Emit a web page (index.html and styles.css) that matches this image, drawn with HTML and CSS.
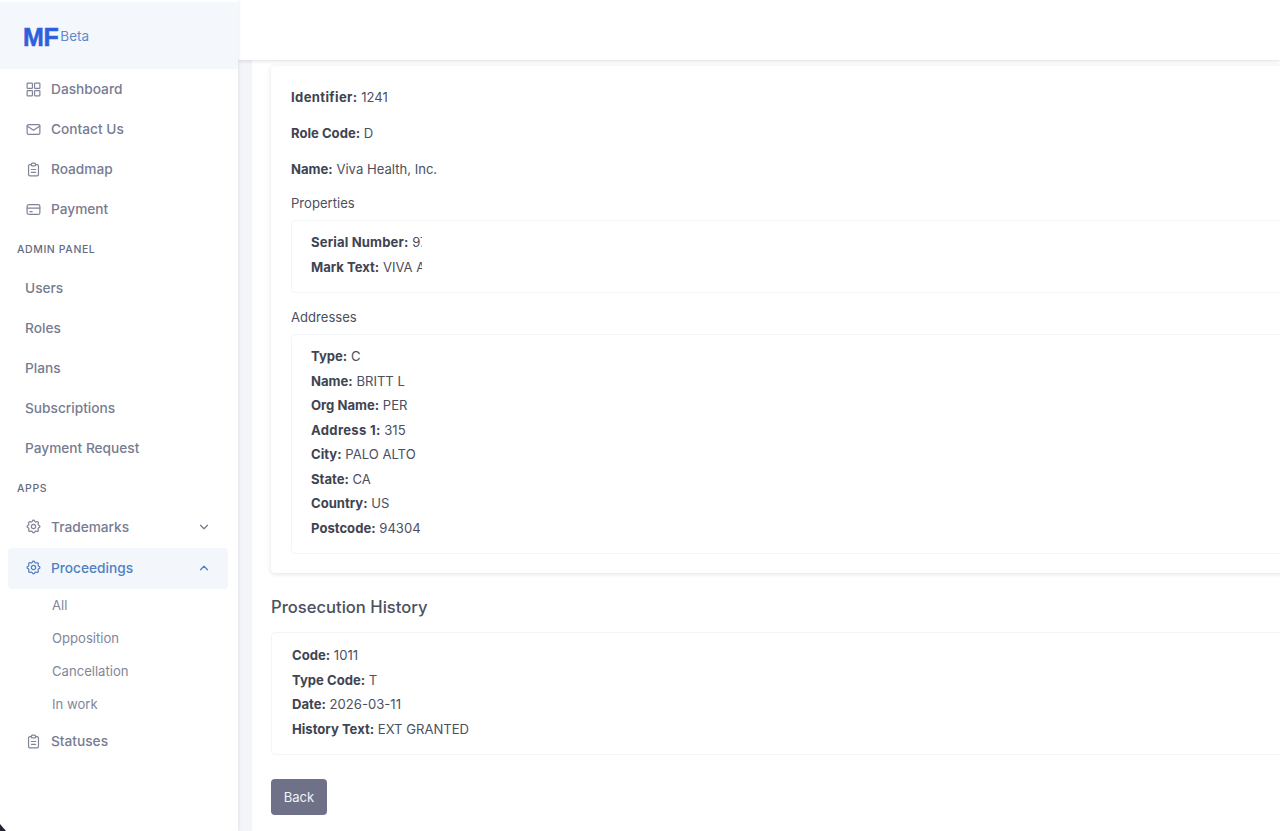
FILE: index.html
```html
<!DOCTYPE html>
<html lang="en">
<head>
<meta charset="utf-8">
<title>Proceedings</title>
<link rel="stylesheet" href="styles.css">
</head>
<body>
<svg class="defs" width="0" height="0" aria-hidden="true">
  <symbol id="i-grid" viewBox="0 0 24 24"><rect x="3" y="3" width="7.5" height="7.5" rx="1"/><rect x="13.5" y="3" width="7.5" height="7.5" rx="1"/><rect x="3" y="13.5" width="7.5" height="7.5" rx="1"/><rect x="13.5" y="13.5" width="7.5" height="7.5" rx="1"/></symbol>
  <symbol id="i-mail" viewBox="0 0 24 24"><rect x="3" y="5" width="18" height="14" rx="2"/><path d="M3 7l9 6 9-6"/></symbol>
  <symbol id="i-clip" viewBox="0 0 24 24"><path d="M9 5H7a2 2 0 0 0-2 2v12a2 2 0 0 0 2 2h10a2 2 0 0 0 2-2V7a2 2 0 0 0-2-2h-2"/><rect x="9" y="3" width="6" height="4" rx="1.5"/><path d="M9 12h6M9 16h6"/></symbol>
  <symbol id="i-card" viewBox="0 0 24 24"><rect x="3" y="5" width="18" height="14" rx="2.5"/><path d="M3 10h18M7 15h3"/></symbol>
  <symbol id="i-gear" viewBox="0 0 24 24"><path d="M10.3 4.3c.4-1.8 3-1.8 3.4 0a1.7 1.7 0 0 0 2.6 1.1c1.5-.9 3.3.8 2.4 2.4a1.7 1.7 0 0 0 1 2.5c1.8.4 1.8 3 0 3.4a1.7 1.7 0 0 0-1 2.6c.9 1.5-.9 3.3-2.4 2.4a1.7 1.7 0 0 0-2.6 1c-.4 1.8-3 1.8-3.4 0a1.7 1.7 0 0 0-2.6-1c-1.5.9-3.3-.9-2.4-2.4a1.7 1.7 0 0 0-1-2.6c-1.8-.4-1.8-3 0-3.4a1.7 1.7 0 0 0 1-2.5c-.9-1.6.9-3.3 2.4-2.4a1.7 1.7 0 0 0 2.6-1.1z"/><circle cx="12" cy="12" r="3"/></symbol>
  <symbol id="i-down" viewBox="0 0 24 24"><path d="M6 9l6 6 6-6"/></symbol>
  <symbol id="i-up" viewBox="0 0 24 24"><path d="M6 15l6-6 6 6"/></symbol>
</svg>
<div class="app">
  <aside class="sidebar">
    <div class="brand"><span class="logo">MF</span><span class="beta">Beta</span></div>
    <nav class="nav">
      <a class="item"><svg class="ico"><use href="#i-grid"/></svg>Dashboard</a>
      <a class="item"><svg class="ico"><use href="#i-mail"/></svg>Contact Us</a>
      <a class="item"><svg class="ico"><use href="#i-clip"/></svg>Roadmap</a>
      <a class="item"><svg class="ico"><use href="#i-card"/></svg>Payment</a>
      <div class="section">ADMIN PANEL</div>
      <a class="item plain">Users</a>
      <a class="item plain">Roles</a>
      <a class="item plain">Plans</a>
      <a class="item plain">Subscriptions</a>
      <a class="item plain">Payment Request</a>
      <div class="section apps">APPS</div>
      <a class="item tm"><svg class="ico"><use href="#i-gear"/></svg>Trademarks<svg class="chev"><use href="#i-down"/></svg></a>
      <a class="item active"><svg class="ico"><use href="#i-gear"/></svg>Proceedings<svg class="chev"><use href="#i-up"/></svg></a>
      <div class="sub">
        <a class="subitem">All</a>
        <a class="subitem">Opposition</a>
        <a class="subitem">Cancellation</a>
        <a class="subitem">In work</a>
      </div>
      <a class="item"><svg class="ico"><use href="#i-clip"/></svg>Statuses</a>
    </nav>
    <div class="corner"></div>
  </aside>
  <div class="main">
    <header class="topbar"></header>
    <div class="stage">
      <div class="panel">
        <section class="card">
          <p class="line clip-id ident"><b>Identifier:</b> 1241</p>
          <p class="line clip-id"><b>Role Code:</b> D</p>
          <p class="line"><b>Name:</b> Viva Health, Inc.</p>
          <h4 class="label">Properties</h4>
          <div class="box props">
            <div class="row clip-a serial"><b>Serial Number:</b> 97</div>
            <div class="row clip-a"><b>Mark Text:</b> VIVA AID</div>
          </div>
          <h4 class="label addr">Addresses</h4>
          <div class="box addrs">
            <div class="row"><b>Type:</b> C</div>
            <div class="row clip-b"><b>Name:</b> BRITT L</div>
            <div class="row clip-b"><b>Org Name:</b> PER</div>
            <div class="row clip-b addr1"><b>Address 1:</b> 315</div>
            <div class="row"><b>City:</b> PALO ALTO</div>
            <div class="row"><b>State:</b> CA</div>
            <div class="row"><b>Country:</b> US</div>
            <div class="row"><b>Postcode:</b> 94304</div>
          </div>
        </section>
        <h3 class="heading">Prosecution History</h3>
        <div class="box history">
          <div class="row"><b>Code:</b> 1011</div>
          <div class="row"><b>Type Code:</b> T</div>
          <div class="row"><b>Date:</b> 2026-03-11</div>
          <div class="row"><b>History Text:</b> EXT GRANTED</div>
        </div>
        <button class="back" type="button">Back</button>
      </div>
    </div>
  </div>
</div>
</body>
</html>
```
FILE: styles.css
```css
* { box-sizing: border-box; }
html, body { margin: 0; height: 100%; overflow: hidden; }
body { background: #fff; font-family: "Inter", "Liberation Sans", sans-serif; font-size: 13.1px; color: #4b5060; }
.defs { position: absolute; }
.app { display: grid; grid-template-columns: 238px 1fr; height: 831px; }

.sidebar { position: relative; background: #fff; box-shadow: 0 0 4px rgba(60, 70, 100, .16); z-index: 3; overflow: hidden; }
.brand { height: 67px; margin-top: 2px; background: #f4f7fb; display: flex; align-items: center; padding-left: 23px; }
.logo { font-family: "Liberation Sans", sans-serif; font-weight: 700; font-size: 25px; letter-spacing: -.4px; -webkit-text-stroke: .5px #2f5fdc; color: #2f5fdc; line-height: 1; margin-top: 3px; }
.beta { color: #5e8ad0; font-size: 13.5px; margin-left: 2px; }

.nav { display: flex; flex-direction: column; }
.item { display: flex; align-items: center; height: 40px; padding-left: 24.5px; color: #777c92; font-weight: 500; font-size: 13.7px; }
.item.plain { padding-left: 25px; }
.ico { width: 17px; height: 17px; margin-right: 9.5px; fill: none; stroke: #7f8498; stroke-width: 1.7; stroke-linecap: round; stroke-linejoin: round; flex: none; }
.section { height: 39px; padding: 14px 0 0 17px; font-size: 10.5px; font-weight: 500; letter-spacing: .6px; color: #666b80; }
.section.apps { height: 38px; padding-top: 14px; }
.tm { height: 41px; }
.chev { width: 14px; height: 14px; margin-left: auto; margin-right: 27px; fill: none; stroke: currentColor; stroke-width: 2.2; stroke-linecap: round; stroke-linejoin: round; }
.item.active { margin: 1px 10px 0 8px; padding: 0 0 2px 16.5px; height: 41px; border-radius: 4px; background: #f3f6fb; color: #4f80c4; }
.item.active .ico { stroke: #4f80c4; }
.item.active .chev { margin-right: 17px; }
.sub { display: flex; flex-direction: column; margin: -.5px 0 .5px; }
.subitem { height: 33px; display: flex; align-items: center; padding-left: 52px; color: #82869a; font-size: 13.1px; }
.corner { position: absolute; left: 0; bottom: 0; width: 6px; height: 7px; background: #23262e; clip-path: polygon(0 0, 100% 100%, 0 100%); }

.main { display: flex; flex-direction: column; min-width: 0; overflow: hidden; }
.topbar { height: 60px; flex: none; background: #fff; box-shadow: 0 1px 4px rgba(60, 70, 100, .18); position: relative; z-index: 2; }
.stage { flex: 1; background: #f4f5f9; padding-left: 14px; min-height: 0; }
.panel { background: #fff; height: 100%; padding: 6px 0 0 19px; }
.card { margin-right: -30px; height: 507px; padding: 13px 0 0 20px; border-radius: 4px; box-shadow: 0 1px 4px rgba(60, 70, 100, .16); }

p.line { margin: 0; height: 36px; line-height: 36px; white-space: nowrap; overflow: hidden; }
b { font-weight: 700; color: #3f4452; }
.clip-id { width: 96px; }
.ident b { letter-spacing: .35px; }
.serial b { letter-spacing: .15px; }
.addr1 b { letter-spacing: .3px; }
.label { margin: 0; font-weight: 400; font-size: 13.1px; color: #4b5060; line-height: 18px; padding-top: 7px; height: 33px; }
.label.addr { height: 41px; padding-top: 15px; }
.box { border: 1px solid #f3f4f7; border-radius: 4px; padding: 9px 0 0 19px; }
.props { height: 73px; }
.addrs { height: 220px; }
.row { height: 24.5px; line-height: 24.5px; white-space: nowrap; overflow: hidden; }
.clip-a { width: 111px; }
.clip-b { width: 97px; }
.heading { margin: 0; height: 59px; padding-top: 23px; font-size: 16.6px; font-weight: 500; line-height: 22px; color: #4b5060; }
.history { margin-right: -30px; height: 123px; padding: 10px 0 0 20px; }
.back { display: block; margin-top: 24px; width: 56px; height: 36px; border: 0; border-radius: 4px; background: #6e7187; color: #f2f3f6; font: 400 13.1px "Inter", "Liberation Sans", sans-serif; }
```
